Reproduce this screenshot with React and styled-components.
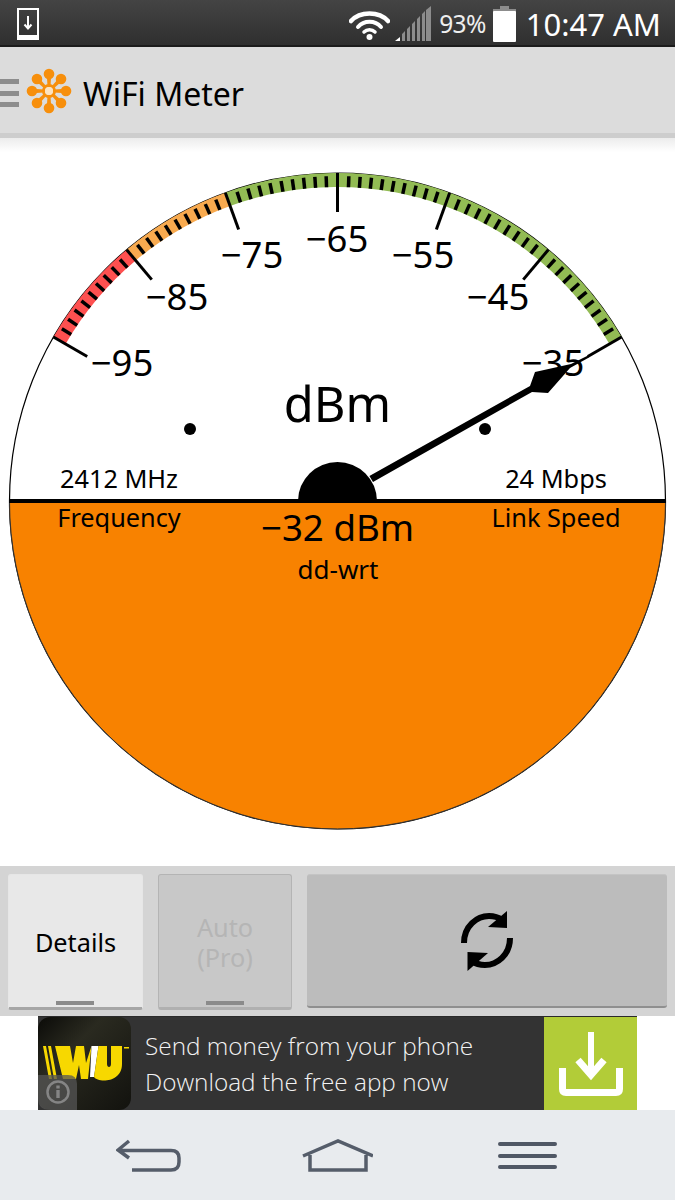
import React from "react";
import styled, { createGlobalStyle } from "styled-components";

const Global = createGlobalStyle`
  html, body { margin: 0; padding: 0; background: #fff; }
  #root { width: 675px; height: 1200px; overflow: hidden; }
  * { box-sizing: border-box; }
`;
const FONT = `"Noto Sans", "Open Sans", sans-serif`;

const Screen = styled.div`
  width: 675px; height: 1200px; display: flex; flex-direction: column;
  font-family: ${FONT}; background: #fff;
`;
const StatusBar = styled.div`
  height: 47px; flex: none; display: flex; align-items: center; padding: 2px 14px 0 17px;
  background: linear-gradient(#444444, #2f2f2f); border-bottom: 2px solid #1c1c1c; color: #fff;
`;
const StatusRight = styled.div`display: flex; align-items: center; margin-left: auto;`;
const Battery = styled.span`font-size: 24.5px; letter-spacing: -0.6px; margin: 0 7px 0 8px; color: #eee;`;
const Clock = styled.span`font-size: 31px; margin-left: 10px; white-space: nowrap;`;
const ActionBar = styled.div`
  height: 91px; flex: none; background: #dcdcdc; display: flex; align-items: center;
  border-bottom: 5px solid #cdcdcd; padding-top: 6px;
`;
const Title = styled.h1`font-size: 32px; font-weight: 400; color: #000; margin: 0 0 0 11px;`;
const HamburgerBars = styled.div`display: flex; flex-direction: column; gap: 6.5px; width: 19px;`;
const HamburgerBar = styled.div`height: 5px; background: #8d8d8d;`;
const GaugeArea = styled.div`
  flex: 1; background: linear-gradient(#ececec, #fff 14px);
  display: flex; justify-content: center;
`;
const ButtonBar = styled.div`
  height: 150px; flex: none; background: #d4d4d4; display: grid;
  grid-template-columns: 135px 134px 360px; gap: 15px; padding: 8px 8px 6px 8px;
`;
const TabButton = styled.div`
  position: relative; display: flex; align-items: center; justify-content: center; text-align: center;
  height: 136px; border-radius: 3px; font-size: 25.3px; line-height: 30px; padding-top: 1px;
  background: ${p => p.$on ? "#e8e8e8" : "#c8c8c8"};
  color: ${p => p.$on ? "#000" : "#b5b5b5"};
  border: 1px solid ${p => p.$on ? "#e6e6e6" : "#b4b4b4"};
  border-bottom: 3px solid ${p => p.$on ? "#a6a6a6" : "#b0b0b0"};
  &::after {
    content: ""; position: absolute; left: 47px; width: 38px; bottom: 2px; height: 4px; background: #8b8b8b;
  }
`;
const RefreshButton = styled.div`
  height: 134px; border-radius: 3px; background: #bcbcbc; border-top: 1px solid #c4c4c4;
  border-bottom: 2px solid #8f8f8f; display: flex; align-items: center; justify-content: center;
`;
const AdRow = styled.div`height: 94px; flex: none; padding: 0 38px; background: #fff;`;
const Ad = styled.div`height: 94px; display: flex; background: #333333; border-top: 1px solid #2a2a2a; color: #fff;`;
const AdIconWrap = styled.div`width: 93px; height: 93px; flex: none;`;
const AdText = styled.div`
  flex: 1; padding: 11px 0 0 14px; font-family: "Open Sans", "Noto Sans", sans-serif;
  font-size: 24.35px; line-height: 36px; font-weight: 300; color: #f2f2f2;
`;
const AdLine = styled.div`white-space: nowrap;`;
const AdAction = styled.div`width: 93px; flex: none; background: #b2cc38; display: flex; align-items: center; justify-content: center;`;
const NavBar = styled.div`
  height: 90px; flex: none; background: #e8ebee; display: grid;
  grid-template-columns: 116px 66px 120px 71px 125px 60px 117px; padding-top: 29px;
  align-items: start;
`;
const NavCell = styled.div`grid-column: ${p => p.$col}; display: flex; justify-content: center;`;

const CX = 337.5, CY = 501, R = 328;
const pol = (deg, r) => {
  const a = (deg * Math.PI) / 180;
  return [CX + r * Math.sin(a), CY - r * Math.cos(a)];
};
const arc = (a0, a1, r) => {
  const [x0, y0] = pol(a0, r), [x1, y1] = pol(a1, r);
  return `M${x0} ${y0}A${r} ${r} 0 0 1 ${x1} ${y1}`;
};
const segment = (a, r0, r1) => {
  const [x0, y0] = pol(a, r0), [x1, y1] = pol(a, r1);
  return { x1: x0, y1: y0, x2: x1, y2: y1 };
};
const MINOR = [];
for (let a = -60; a <= 60; a += 2) if (a % 20 !== 0) MINOR.push(a);
const MAJOR = [-60, -40, -20, 0, 20, 40, 60];
const LABELS = [
  ["−95", 122, 376], ["−85", 177, 310], ["−75", 252, 268], ["−65", 337, 252],
  ["−55", 423, 268], ["−45", 498, 310], ["−35", 553, 376],
];

function Gauge() {
  const [lx] = pol(-90, R);
  const [rx] = pol(90, R);
  return (
    <svg width="675" height="728" viewBox="0 138 675 728" fontFamily={FONT}>
      <circle cx={CX} cy={CY} r={R} fill="#fff" stroke="#000" strokeWidth="1.2" />
      <path d={`M${lx} ${CY}A${R} ${R} 0 0 0 ${rx} ${CY}Z`} fill="#f88200" stroke="#333" strokeWidth="1" />
      <path d={arc(-60, -40, R - 7)} fill="none" stroke="#fe5050" strokeWidth="14" />
      <path d={arc(-40, -20, R - 7)} fill="none" stroke="#f8aa4f" strokeWidth="14" />
      <path d={arc(-20, 60, R - 7)} fill="none" stroke="#92bb54" strokeWidth="14" />
      {MINOR.map(a => <line key={a} {...segment(a, R - 14, R - 3)} stroke="#000" strokeWidth="3.5" />)}
      {MAJOR.map(a => <line key={a} {...segment(a, R - 39, R)} stroke="#000" strokeWidth="3" />)}
      <rect x="9" y="499" width="657" height="4" fill="#000" />
      <path d="M298 501a39.500 39 0 0 1 79 0Z" fill="#000" />
      <path d="M369.400 476L530 386L535 372L571 364L588 355.500L589 357.500L570 368L548 393L532 392L373 482Z" fill="#000" />
      {LABELS.map(([t, x, y]) => <text key={t} x={x} y={y} fontSize="36.500" textAnchor="middle">{t}</text>)}
      <text x="337.500" y="422" fontSize="48.800" textAnchor="middle">dBm</text>
      <circle cx="190" cy="429" r="6" fill="#000" />
      <circle cx="485" cy="429" r="6" fill="#000" />
      <text x="119" y="488" fontSize="25.300" textAnchor="middle">2412 MHz</text>
      <text x="556" y="488" fontSize="25.300" textAnchor="middle">24 Mbps</text>
      <text x="119" y="527" fontSize="25.300" textAnchor="middle">Frequency</text>
      <text x="556" y="527" fontSize="25.300" textAnchor="middle">Link Speed</text>
      <text x="337.500" y="541" fontSize="36.700" textAnchor="middle">−32 dBm</text>
      <text x="338" y="579" fontSize="26" textAnchor="middle">dd-wrt</text>
    </svg>
  );
}

function Flower() {
  const petals = [0, 45, 90, 135, 180, 225, 270, 315];
  return (
    <svg width="46" height="46" viewBox="-23 -23 46 46" style={{ marginLeft: 7, marginBottom: 4 }}>
      {petals.map(a => (
        <g key={a} transform={`rotate(${a})`}>
          <path d="M-1.500 -5L-2 -13H2L1.500 -5Z" fill="#f78f0c" />
          <circle cx="0" cy="-17" r="5.300" fill="#f78f0c" />
        </g>
      ))}
      <circle r="5.500" fill="none" stroke="#f78f0c" strokeWidth="3" />
      <circle r="4" fill="#fde3c0" />
    </svg>
  );
}

export default function App() {
  return (
    <Screen>
      <Global />
      <StatusBar>
        <svg width="22" height="32" viewBox="0 0 22 32">
          <rect x="1" y="1" width="20" height="30" fill="none" stroke="#fff" strokeWidth="2" />
          <rect x="1" y="27" width="20" height="4" fill="#fff" />
          <path d="M11 8V20M7.500 16.500L11 20.500L14.500 16.500" fill="none" stroke="#fff" strokeWidth="2" />
        </svg>
        <StatusRight>
          <svg width="41" height="30" viewBox="0 0 41 30" style={{ marginTop: 3 }}>
            <path d="M2 11C11 1 30 1 39 11" fill="none" stroke="#fff" strokeWidth="4.500" strokeLinecap="round" />
            <path d="M9 17C15 10 26 10 32 17" fill="none" stroke="#fff" strokeWidth="4" strokeLinecap="round" />
            <path d="M15 22C18 19 23 19 26 22" fill="none" stroke="#fff" strokeWidth="3.500" strokeLinecap="round" />
            <circle cx="20.500" cy="27" r="3" fill="#fff" />
          </svg>
          <svg width="36" height="36" viewBox="0 0 36 36" style={{ marginLeft: 5 }}>
            <path d="M0 35L5 31V35Z" fill="#fff" />
            <path d="M7 35V28L10 25V35ZM12 35V23L15 20V35ZM17 35V18L20 15V35ZM22 35V13L25 10V35ZM27 35V8L30 5V35ZM31 35V4L36 0V35Z" fill="#8c8c8c" />
          </svg>
          <Battery>93%</Battery>
          <svg width="23" height="36" viewBox="0 0 23 36">
            <path d="M7 0H16V3H23V35H0V3H7Z" fill="#8c8c8c" />
            <rect x="0" y="5" width="23" height="31" rx="1" fill="#fff" />
          </svg>
          <Clock>10:47 AM</Clock>
        </StatusRight>
      </StatusBar>
      <ActionBar>
        <HamburgerBars>
          <HamburgerBar /><HamburgerBar /><HamburgerBar />
        </HamburgerBars>
        <Flower />
        <Title>WiFi Meter</Title>
      </ActionBar>
      <GaugeArea><Gauge /></GaugeArea>
      <ButtonBar>
        <TabButton $on>Details</TabButton>
        <TabButton>Auto<br />(Pro)</TabButton>
        <RefreshButton>
          <svg width="58" height="64" viewBox="459 910 58 64">
            <path d="M465 944C465 927 478 917 490 917C495 917 499 918 503 921" fill="none" stroke="#000" strokeWidth="6" />
            <path d="M508 912L508 929L489 928Z" fill="#000" />
            <path d="M511 939C511 956 498 966 486 966C481 966 477 965 473 962" fill="none" stroke="#000" strokeWidth="6" />
            <path d="M468.500 972L468.500 953L489 954Z" fill="#000" />
          </svg>
        </RefreshButton>
      </ButtonBar>
      <AdRow>
        <Ad>
          <AdIconWrap>
            <svg width="93" height="93" viewBox="0 0 93 93">
              <defs>
                <linearGradient id="wuBg" x1="0" y1="0" x2="1" y2="1">
                  <stop offset="0" stopColor="#0b0b08" />
                  <stop offset=".35" stopColor="#2a2a20" />
                  <stop offset="1" stopColor="#12120e" />
                </linearGradient>
              </defs>
              <rect width="93" height="93" rx="12" fill="url(#wuBg)" />
              <path d="M5 29H8L14 62H11ZM10 29H13L19 62H16Z" fill="#f7d800" />
              <path d="M17 29H32L35 46L38 29H46L48 46L53.500 29L50 62H43L41 48L38 62H25Z" fill="#f7d800" />
              <path d="M53.500 29H60.500L56 60H52Z" fill="#fff" />
              <path d="M60.500 29H69V47C69 51 73 51 73 47V29H84V47C84 66 60 66 56 60Z" fill="#f7d800" />
              <rect x="86" y="30" width="5" height="1.500" fill="#f7d800" />
              <path d="M0 58H30Q39 58 39 67V93H12Q0 93 0 81Z" fill="#555" fillOpacity=".75" />
              <circle cx="20" cy="75" r="10.500" fill="none" stroke="#858585" strokeWidth="2.500" />
              <rect x="18.300" y="73" width="3.400" height="8" fill="#858585" />
              <rect x="18.300" y="68.500" width="3.400" height="3" fill="#858585" />
            </svg>
          </AdIconWrap>
          <AdText>
            <AdLine>Send money from your phone</AdLine>
            <AdLine>Download the free app now</AdLine>
          </AdText>
          <AdAction>
            <svg width="64" height="64" viewBox="0 0 64 64">
              <path d="M32 0V38" stroke="#fff" strokeWidth="6" fill="none" />
              <path d="M19 28L32 43L45 28" stroke="#fff" strokeWidth="7" fill="none" />
              <path d="M3.500 36V57Q3.500 60.500 7 60.500H57Q60.500 60.500 60.500 57V36" stroke="#fff" strokeWidth="7" fill="none" />
            </svg>
          </AdAction>
        </Ad>
      </AdRow>
      <NavBar>
        <NavCell $col="2">
          <svg width="66" height="34" viewBox="0 0 66 34" fill="none" stroke="#555d6a" strokeWidth="3.500">
            <path d="M13 2L2 11L13 19M3 11.500H55Q63 11.500 63 19V23Q63 31 55 31H16" />
          </svg>
        </NavCell>
        <NavCell $col="4">
          <svg width="71" height="34" viewBox="0 0 71 34" fill="none" stroke="#555d6a" strokeWidth="3.500">
            <path d="M1 17L36 2L71 17M8 16V31H64V16" />
          </svg>
        </NavCell>
        <NavCell $col="6">
          <svg width="60" height="34" viewBox="0 0 60 34" fill="none" stroke="#4f5764" strokeWidth="4" strokeLinecap="round">
            <path d="M2 5H57M2 17H57M2 28H57" />
          </svg>
        </NavCell>
      </NavBar>
    </Screen>
  );
}
